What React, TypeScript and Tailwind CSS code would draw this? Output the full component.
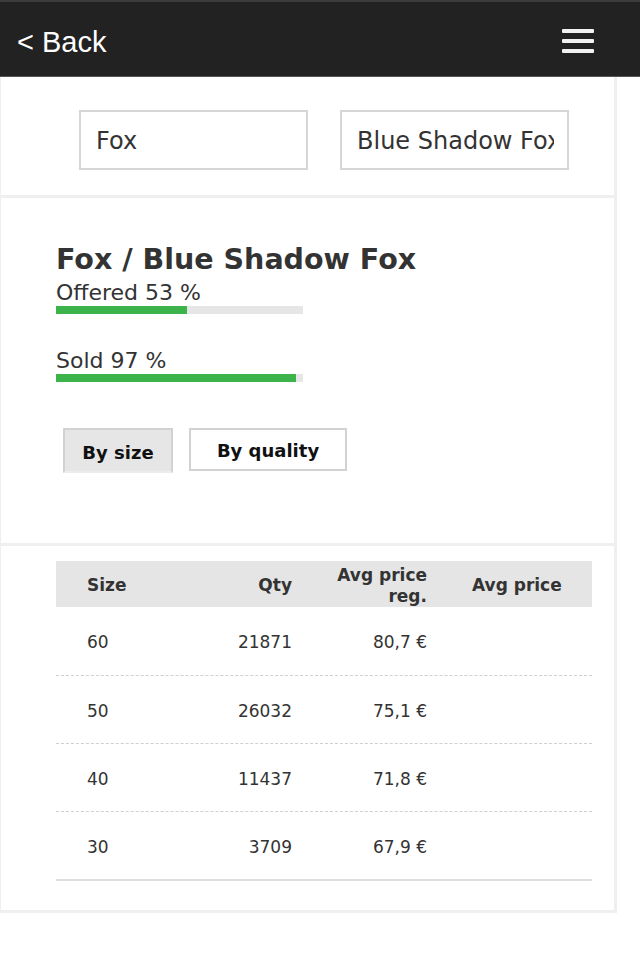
import React from "react";

const rows = [
  { size: "60", qty: "21871", reg: "80,7 €", avg: "" },
  { size: "50", qty: "26032", reg: "75,1 €", avg: "" },
  { size: "40", qty: "11437", reg: "71,8 €", avg: "" },
  { size: "30", qty: "3709", reg: "67,9 €", avg: "" },
];

function Bar({ pct }: { pct: number }) {
  return (
    <div className="w-[247px] h-[8px] bg-[#e6e6e6]">
      <div className="h-full bg-[#3cb44b]" style={{ width: `${pct}%` }} />
    </div>
  );
}

export default function App() {
  return (
    <div className="w-[640px] min-h-[960px] bg-white font-['DejaVu_Sans',sans-serif] text-[#333]">
      <header className="h-[77px] bg-[#222222] border-t-2 border-[#3c3c3c] border-b border-b-[#555] flex items-center justify-between pl-[17px] pr-[46px]">
        <span className="mt-[6px] font-['Liberation_Sans',Arial,sans-serif] text-[29px] text-white leading-none">
          &lt; Back
        </span>
        <div className="mt-[4px] flex flex-col gap-[6px] w-[32px]">
          <span className="block h-[4px] bg-[#f2f2f2] rounded-[1px]" />
          <span className="block h-[4px] bg-[#f2f2f2] rounded-[1px]" />
          <span className="block h-[4px] bg-[#f2f2f2] rounded-[1px]" />
        </div>
      </header>

      <div className="w-[617px]">
        <section className="h-[121px] border-l border-r-[3px] border-b-[3px] border-[#efefef] pt-[33px] pl-[78px] flex gap-[32px]">
          <input
            readOnly
            value="Fox"
            className="w-[229px] h-[60px] border-2 border-[#d6d6d6] pl-[15px] pr-[13px] pt-[2px] text-[24px] text-[#333] outline-none font-['DejaVu_Sans',sans-serif]"
          />
          <input
            readOnly
            value="Blue Shadow Fox"
            className="w-[229px] h-[60px] border-2 border-[#d6d6d6] pl-[15px] pr-[13px] pt-[2px] text-[24px] text-[#333] outline-none font-['DejaVu_Sans',sans-serif]"
          />
        </section>

        <section className="h-[348px] border-l border-r-[3px] border-b-[3px] border-[#efefef] pt-[46px] pl-[55px]">
          <h1 className="text-[28.5px] font-bold leading-[32px] text-[#333]">Fox / Blue Shadow Fox</h1>
          <div className="mt-[5px] text-[22px] leading-[24px]">Offered 53 %</div>
          <div className="mt-[1px]">
            <Bar pct={53} />
          </div>
          <div className="mt-[35px] text-[22px] leading-[24px]">Sold 97 %</div>
          <div className="mt-[1px]">
            <Bar pct={97} />
          </div>
          <div className="mt-[46px] ml-[7px] flex items-start gap-[16px]">
            <button className="w-[110px] h-[45px] bg-[#e6e6e6] border-2 border-[#d2d2d2] border-b-[#ececec] text-[18px] font-bold text-[#111] pt-[3px]">
              By size
            </button>
            <button className="w-[158px] h-[43px] bg-white border-2 border-[#d2d2d2] text-[18px] font-bold text-[#111] pt-[1px]">
              By quality
            </button>
          </div>
        </section>

        <section className="h-[367px] border-l border-r-[3px] border-b-[3px] border-[#efefef] pt-[15px] pl-[55px]">
          <div className="w-[536px]">
            <div className="grid grid-cols-[134px_134px_134px_134px] h-[46px] bg-[#e5e5e5] text-[17px] font-bold text-[#333]">
              <div className="flex items-center pl-[31px] pt-[3px]">Size</div>
              <div className="flex items-center justify-end pr-[32px] pt-[3px]">Qty</div>
              <div className="flex items-center justify-end pr-[31px] pt-[3px] text-right leading-[21px]">
                Avg price
                <br />
                reg.
              </div>
              <div className="flex items-center pl-[14px] pt-[3px]">Avg price</div>
            </div>
            {rows.map((r, i) => (
              <div
                key={r.size}
                className={
                  "grid grid-cols-[134px_134px_134px_134px] text-[17px] text-[#333] " +
                  (i === rows.length - 1
                    ? "h-[69px] border-b-2 border-solid border-[#dddddd]"
                    : i === 0
                    ? "h-[69px] border-b border-dashed border-[#d0d0d0]"
                    : "h-[68px] border-b border-dashed border-[#d0d0d0]")
                }
              >
                <div className="flex items-center pl-[31px] pt-[4px]">{r.size}</div>
                <div className="flex items-center justify-end pr-[32px] pt-[4px]">{r.qty}</div>
                <div className="flex items-center justify-end pr-[31px] pt-[4px]">{r.reg}</div>
                <div className="flex items-center pl-[14px] pt-[4px]">{r.avg}</div>
              </div>
            ))}
          </div>
        </section>
      </div>
    </div>
  );
}
